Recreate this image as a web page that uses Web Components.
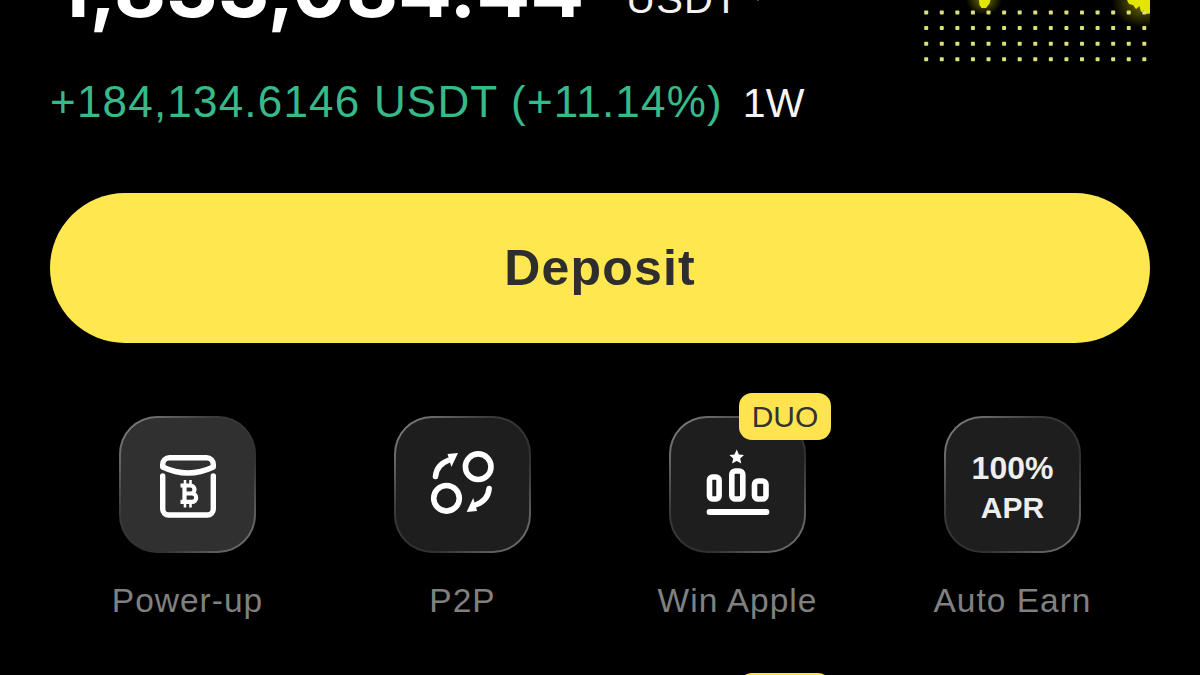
<!DOCTYPE html>
<html lang="en">
<head>
<meta charset="utf-8">
<title>Wallet</title>
<style>
  html, body { margin: 0; padding: 0; background: #000; }
  body { font-family: "Liberation Sans", Arial, sans-serif; }
</style>
</head>
<body>

<wallet-screen>
  <balance-header amount="1,833,084.44" currency="USDT"></balance-header>
  <pnl-line change="+184,134.6146 USDT (+11.14%)" period="1W"></pnl-line>
  <deposit-button>Deposit</deposit-button>
  <action-grid>
    <action-tile label="Power-up" tone="light">
      <svg viewBox="0 0 137 137" fill="none" stroke="#fff" stroke-width="5.4" stroke-linecap="round" stroke-linejoin="round">
        <path d="M43.7 50V48.5a6.8 6.8 0 0 1 6.8-6.8h37a6.8 6.8 0 0 1 6.8 6.8V51Q69 63 43.7 51Z"/>
        <path d="M43.7 60V93a6 6 0 0 0 6 6h38.6a6 6 0 0 0 6-6V60"/>
        <path stroke-width="4.2" stroke-linecap="butt" stroke-linejoin="miter" d="M61.5 69.5H71.5a4 4 0 0 1 0 8H66M71.5 77.5H73a4.2 4.2 0 0 1 0 8.4H61.5M65.5 69.5V85.9"/>
        <path stroke-width="2.6" stroke-linecap="butt" d="M66 64V68M71.5 64V68M66 87.5V91.5M71.5 87.5V91.5"/>
      </svg>
    </action-tile>
    <action-tile label="P2P">
      <svg viewBox="0 0 137 137" fill="none" stroke="#fff" stroke-width="5.6" stroke-linecap="round">
        <circle cx="84.2" cy="50.7" r="12.8"/>
        <circle cx="52.5" cy="82.3" r="12.8"/>
        <path d="M41.5 60.5Q42.5 49 54 44.5"/>
        <path d="M95.1 72.5Q94.1 84 82.6 88.5"/>
        <path fill="#fff" stroke="none" d="M53.5 38 64 37 57.4 51Z"/>
        <path fill="#fff" stroke="none" d="M83.1 95 72.6 96 79.2 82Z"/>
      </svg>
    </action-tile>
    <action-tile label="Win Apple" badge="DUO">
      <svg viewBox="0 0 137 137" fill="none" stroke="#fff" stroke-width="5.6" stroke-linejoin="round">
        <path fill="#fff" stroke="none" d="M67.7 33.5 69.9 38.4 75 39 71.2 42.5 72.3 47.6 67.7 45 63.1 47.6 64.2 42.5 60.4 39 65.5 38.4Z"/>
        <rect x="40.5" y="61" width="9.6" height="22" rx="3"/>
        <rect x="62.8" y="55" width="11" height="28" rx="3.6"/>
        <rect x="85.5" y="65" width="11.5" height="18" rx="3.6"/>
        <path stroke-width="5.8" stroke-linecap="round" d="M40.5 96H97.5"/>
      </svg>
    </action-tile>
    <action-tile label="Auto Earn">
      <div style="padding-top:6px;font:700 32px/39px 'Liberation Sans',Arial,sans-serif;color:#eee;text-align:center;">100%<br><span style="font-size:30px">APR</span></div>
    </action-tile>
    <action-tile></action-tile>
    <action-tile></action-tile>
    <action-tile badge=""></action-tile>
    <action-tile></action-tile>
  </action-grid>
</wallet-screen>

<script>
  class WalletScreen extends HTMLElement {
    constructor() {
      super()
      this.attachShadow({ mode: 'open' }).innerHTML = `
        <style>
          :host {
            display: flex;
            flex-direction: column;
            box-sizing: border-box;
            width: 1200px;
            height: 675px;
            padding: 0 50px;
            overflow: hidden;
            background: #000;
            color: #fff;
            font-family: "Liberation Sans", Arial, sans-serif;
          }
        </style>
        <slot></slot>`
    }
  }

  class BalanceHeader extends HTMLElement {
    constructor() {
      super()
      const amount = this.getAttribute('amount')
      const currency = this.getAttribute('currency')
      // the dots of the mini chart: 15 x 4
      let dots = ''
      for (let r = 0; r < 4; r++) {
        for (let c = 0; c < 15; c++) {
          dots += `<rect x="${4.2 + c * 15.58}" y="${10.5 + r * 15.6}" width="4" height="4" rx=".8"/>`
        }
      }
      this.attachShadow({ mode: 'open' }).innerHTML = `
        <style>
          :host {
            display: flex;
            align-items: flex-start;
            height: 78px;
            flex: none;
          }
          .amount {
            margin: -62px 0 0 5px;
            font: 700 80px/100px Inter, "Liberation Sans", sans-serif;
            white-space: nowrap;
          }
          .cur {
            display: flex;
            align-items: flex-start;
            margin: -26px 0 0 42px;
            font: 400 40px/50px "Liberation Sans", Arial, sans-serif;
            letter-spacing: 1px;
            color: #f2f2f2;
          }
          .cur svg { margin: 21px 0 0 12px; }
          .chart { margin-left: auto; flex: none; display: block; }
        </style>
        <div class="amount">${amount}</div>
        <div class="cur">${currency}
          <svg width="14" height="8" viewBox="0 0 14 8" fill="none" stroke="#ccc" stroke-width="2"><path d="M2 0 7 4.5 12 0"/></svg>
        </div>
        <svg class="chart" width="230" height="69" viewBox="0 0 230 69">
          <defs>
            <radialGradient id="g">
              <stop offset="0" stop-color="#e6e600" stop-opacity=".5"/>
              <stop offset="1" stop-color="#e6e600" stop-opacity="0"/>
            </radialGradient>
            <clipPath id="c"><rect width="230" height="69"/></clipPath>
          </defs>
          <g clip-path="url(#c)">
            <ellipse cx="64" cy="0" rx="18" ry="15" fill="url(#g)"/>
            <ellipse cx="222" cy="2" rx="30" ry="26" fill="url(#g)"/>
            <path fill="#e3e600" d="M59 0H70.5L69.5 3.5 66 8H61.5L59.5 5Z"/>
            <path fill="#e3e600" d="M207 0H230V13.5L225 14 224 10 221 12 219.5 6 216 9 213 5 209 4Z"/>
            <g fill="#dde07a">${dots}</g>
          </g>
        </svg>`
    }
  }

  class PnlLine extends HTMLElement {
    constructor() {
      super()
      this.attachShadow({ mode: 'open' }).innerHTML = `
        <style>
          :host {
            display: flex;
            gap: 20px;
            align-items: baseline;
            flex: none;
            font: 400 44px/48px "Liberation Sans", Arial, sans-serif;
            white-space: nowrap;
          }
          .chg { color: #38b98a; letter-spacing: 1.2px; }
          .per { color: #f5f5f5; font-size: 41px; }
        </style>
        <span class="chg">${this.getAttribute('change')}</span>
        <span class="per">${this.getAttribute('period')}</span>`
    }
  }

  class DepositButton extends HTMLElement {
    constructor() {
      super()
      this.attachShadow({ mode: 'open' }).innerHTML = `
        <style>
          :host {
            display: flex;
            align-items: center;
            justify-content: center;
            flex: none;
            height: 150px;
            margin-top: 66px;
            border-radius: 75px;
            background: #ffe84f;
            color: #2e2e2e;
            font: 700 50px/1 "Liberation Sans", Arial, sans-serif;
            letter-spacing: 1.2px;
          }
        </style>
        <slot></slot>`
    }
  }

  class ActionGrid extends HTMLElement {
    constructor() {
      super()
      this.attachShadow({ mode: 'open' }).innerHTML = `
        <style>
          :host {
            display: grid;
            grid-template-columns: repeat(4, 275px);
            grid-auto-rows: 280px;
            flex: none;
            margin-top: 73px;
          }
        </style>
        <slot></slot>`
    }
  }

  class ActionTile extends HTMLElement {
    constructor() {
      super()
      const label = this.getAttribute('label') || ''
      const badge = this.getAttribute('badge')
      const face = this.getAttribute('tone') === 'light' ? '#303030' : '#1e1e1e'
      this.attachShadow({ mode: 'open' }).innerHTML = `
        <style>
          :host {
            display: flex;
            flex-direction: column;
            align-items: center;
          }
          .box {
            position: relative;
            box-sizing: border-box;
            display: flex;
            align-items: center;
            justify-content: center;
            width: 137px;
            height: 137px;
            border: 2px solid transparent;
            border-radius: 38px;
            background:
              linear-gradient(${face}, ${face}) padding-box,
              linear-gradient(135deg, #8a8a8a, #3a3a3a 35%, #303030 65%, #7d7d7d) border-box;
          }
          ::slotted(svg) { position: absolute; left: -2px; top: -2px; width: 137px; height: 137px; }
          .badge {
            position: absolute;
            top: -25px;
            right: -27px;
            box-sizing: border-box;
            width: 92px;
            height: 47px;
            border-radius: 13px;
            background: #ffe44f;
            color: #333;
            font: 400 30px/47px "Liberation Sans", Arial, sans-serif;
            text-align: center;
          }
          .label {
            margin-top: 29px;
            color: #808080;
            font: 400 33.5px/38px "Liberation Sans", Arial, sans-serif;
            letter-spacing: 1px;
            white-space: nowrap;
          }
        </style>
        <div class="box">
          <slot></slot>
          ${badge !== null ? `<div class="badge">${badge}</div>` : ''}
        </div>
        <div class="label">${label}</div>`
    }
  }

  customElements.define('wallet-screen', WalletScreen)
  customElements.define('balance-header', BalanceHeader)
  customElements.define('pnl-line', PnlLine)
  customElements.define('deposit-button', DepositButton)
  customElements.define('action-grid', ActionGrid)
  customElements.define('action-tile', ActionTile)
</script>
</body>
</html>
